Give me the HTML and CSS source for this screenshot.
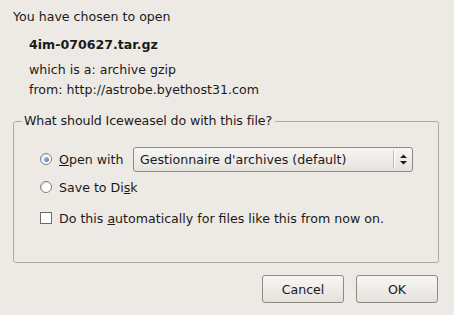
FILE: index.html
```html
<!DOCTYPE html>
<html>
<head><meta charset="utf-8"><link rel="stylesheet" href="styles.css"></head>
<body>
<div class="dlg">
  <div class="intro">You have chosen to open</div>
  <div class="info">
    <div class="fname">4im-070627.tar.gz</div>
    <div class="line first">which is a: archive gzip</div>
    <div class="line">from: http://astrobe.byethost31.com</div>
  </div>
  <fieldset class="frame">
    <legend>What should Iceweasel do with this file?</legend>
    <div class="row openrow">
      <span class="radio on"></span>
      <span class="lbl openlbl"><u>O</u>pen with</span>
      <div class="combo"><span class="ctext">Gestionnaire d'archives (default)</span><span class="sep"></span><span class="arrows"><svg width="7" height="11" viewBox="0 0 7 11"><path d="M3.5 0.5 L7 4 L0 4 Z M0 7 L7 7 L3.5 10.5 Z" fill="#1a1a1a"/></svg></span></div>
    </div>
    <div class="row saverow">
      <span class="radio"></span>
      <span class="lbl">Save to Di<u>s</u>k</span>
    </div>
    <div class="row chkrow">
      <span class="check"></span>
      <span class="lbl">Do this <u>a</u>utomatically for files like this from now on.</span>
    </div>
  </fieldset>
  <div class="buttons">
    <button class="btn">Cancel</button>
    <button class="btn">OK</button>
  </div>
</div>
</body>
</html>
```
FILE: styles.css
```css
html, body { margin: 0; padding: 0; }
body {
  width: 454px; height: 315px; overflow: hidden;
  background: #edeae5;
  font-family: "DejaVu Sans", sans-serif;
  font-size: 12.6px; color: #1a1a1a;
}
.dlg { padding: 7px 15px 0 13px; }
.intro { line-height: 20px; }
.info { padding-left: 16px; margin-top: 8px; }
.fname { font-weight: bold; line-height: 20px; }
.line { line-height: 20px; }
.line.first { margin-top: 5px; }
.frame {
  margin: 13px 0 0 0; padding: 17px 0 31px 26px;
  border: 1px solid #b3aa9c; border-radius: 3px;
  min-width: 0;
}
.frame legend { padding: 0 3px 0 2px; margin-left: -18px; line-height: 16px; letter-spacing: -0.1px; }
.row { display: flex; align-items: center; height: 26px; }
.saverow { margin-top: 2px; }
.chkrow { margin-top: 5px; }
.radio {
  width: 10px; height: 10px; border-radius: 50%;
  border: 1px solid #857f76; background: #fff; margin-right: 7px;
  box-sizing: content-box; position: relative; flex: none;
  box-shadow: inset 1px 1px 1px #dcd9d4;
}
.radio.on::after {
  content: ""; position: absolute; left: 2.5px; top: 2.5px; width: 5px; height: 5px;
  border-radius: 50%; background: radial-gradient(circle at 40% 35%, #8fb6e6, #3d71b8);
}
.check {
  width: 10px; height: 10px; border: 1px solid #6f6a63; background: #fff;
  margin-right: 7px; box-sizing: content-box; flex: none;
}
.lbl { white-space: nowrap; }
.openlbl { width: 74px; flex: none; }
.combo {
  width: 280px; height: 25px; box-sizing: border-box; flex: none;
  border: 1px solid #8f8a81; border-radius: 3px;
  background: linear-gradient(#f7f6f4, #e6e3de);
  display: flex; align-items: center;
}
.ctext { flex: 1; padding-left: 6px; white-space: nowrap; }
.sep { width: 1px; height: 19px; background: #c2bdb4; box-shadow: 1px 0 0 #fff; }
.arrows { width: 18px; display: flex; justify-content: center; align-items: center; }
.arrows svg { display: block; }
.buttons { display: flex; justify-content: flex-end; gap: 12px; margin-top: 12px; padding-right: 1px; }
.btn {
  width: 82px; height: 28px; font: inherit; color: #1a1a1a;
  border: 1px solid #8f8a81; border-radius: 3px;
  background: linear-gradient(#f8f7f5, #e4e1dc);
  padding: 0;
}
```
